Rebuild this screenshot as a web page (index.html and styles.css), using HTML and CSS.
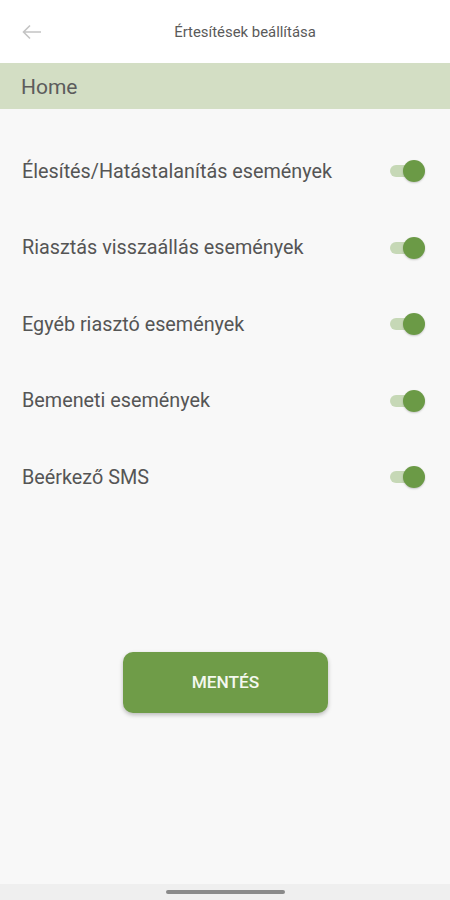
FILE: index.html
```html
<!DOCTYPE html>
<html>
<head>
  <title>Értesítések beállítása</title>
  <link rel="stylesheet" href="styles.css">
</head>
<body>

  <div class="topbar">
    <svg class="back" width="20" height="16" viewBox="0 0 20 16">
      <path d="M19 8H2M8 1.5L1.5 8L8 14.5" fill="none" stroke="#c4c4c4" stroke-width="1.6"/>
    </svg>
    <div class="title">Értesítések beállítása</div>
  </div>

  <div class="section">Home</div>

  <div class="list">
    <div class="row">
      <span>Élesítés/Hatástalanítás események</span>
      <div class="switch"><div class="knob"></div></div>
    </div>
    <div class="row">
      <span>Riasztás visszaállás események</span>
      <div class="switch"><div class="knob"></div></div>
    </div>
    <div class="row">
      <span>Egyéb riasztó események</span>
      <div class="switch"><div class="knob"></div></div>
    </div>
    <div class="row">
      <span>Bemeneti események</span>
      <div class="switch"><div class="knob"></div></div>
    </div>
    <div class="row">
      <span>Beérkező SMS</span>
      <div class="switch"><div class="knob"></div></div>
    </div>
  </div>

  <div class="actions">
    <button>MENTÉS</button>
  </div>

  <div class="navbar">
    <div class="handle"></div>
  </div>

</body>
</html>
```

FILE: styles.css
```css
body {
  font-family: Roboto, "Liberation Sans", sans-serif;
  background-color: #f8f8f8;
  margin: 0;
  height: 900px;
  display: flex;
  flex-direction: column;
  color: #555;
}

.topbar {
  background: #fff;
  height: 63px;
  display: flex;
  align-items: center;
  position: relative;
}
.back {
  margin-left: 22px;
}
.title {
  position: absolute;
  left: 0;
  right: 0;
  text-align: center;
  padding-left: 40px;
  font-size: 14.9px;
  color: #5a5a5a;
}

.section {
  background: #d3dec4;
  height: 46px;
  line-height: 48px;
  padding-left: 21px;
  font-size: 21px;
  color: #5c5c5c;
}

.list {
  padding-top: 24px;
}
.row {
  height: 76.5px;
  display: flex;
  align-items: center;
  justify-content: space-between;
  padding: 0 30px 0 22px;
  font-size: 19.8px;
  color: #555;
}

.switch {
  width: 30px;
  height: 12px;
  border-radius: 6px;
  background: #c6d8b6;
  position: relative;
}
.knob {
  position: absolute;
  right: -5px;
  top: -5px;
  width: 22px;
  height: 22px;
  border-radius: 50%;
  background: #6b9a46;
  box-shadow: 0 1px 2px rgba(0,0,0,0.2);
}

.actions {
  flex: 1;
  display: flex;
  justify-content: center;
  padding-top: 136px;
  padding-left: 1px;
}
button {
  width: 205px;
  height: 61px;
  border: none;
  border-radius: 10px;
  background: #6f9c48;
  color: #f4f8ef;
  font-family: Roboto, "Liberation Sans", sans-serif;
  font-size: 17.3px;
  font-weight: 500;
  box-shadow: 0 2px 4px rgba(0,0,0,0.25);
}

.navbar {
  height: 16px;
  background: #efefef;
  display: flex;
  justify-content: center;
  align-items: center;
}
.handle {
  width: 119px;
  height: 4px;
  border-radius: 2px;
  background: #8a8a8a;
}
```
